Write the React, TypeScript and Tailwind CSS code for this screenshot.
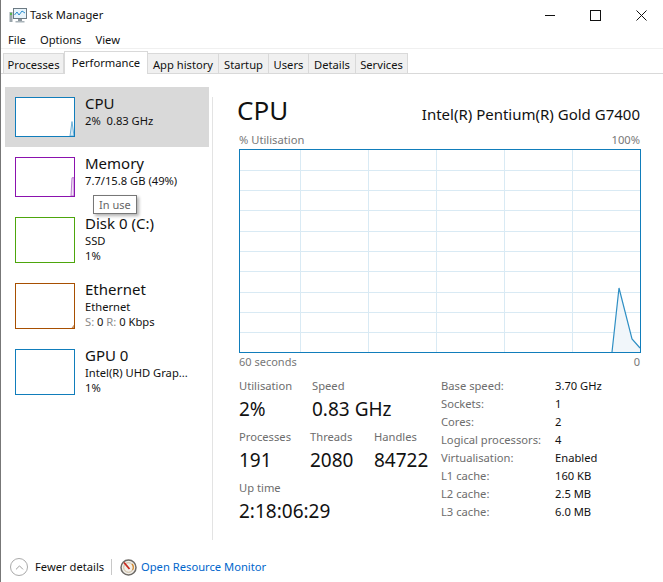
import React from "react";
import { ChevronUp } from "lucide-react";

const font = { fontFamily: '"Noto Sans", sans-serif' };

const tabs = [
  { name: "Processes", width: "w-[61px]" },
  { name: "Performance", width: "w-[84px]" },
  { name: "App history", width: "w-[71px]" },
  { name: "Startup", width: "w-[50px]" },
  { name: "Users", width: "w-[40px]" },
  { name: "Details", width: "w-[47px]" },
  { name: "Services", width: "w-[52px]" },
];

const TaskIcon = () => (
  <svg width="18" height="17" viewBox="0 0 18 17">
    <rect x="0.5" y="5" width="3" height="10" fill="#9aa5ab" />
    <rect x="4.5" y="1.5" width="13" height="10" fill="#e8f4fb" stroke="#6c7a83" />
    <path d="M5.5 8 L8 5 L10 8 L13 4 L16 6" fill="none" stroke="#2a8fd0" strokeWidth="1" />
    <rect x="9" y="12" width="4" height="2" fill="#8a959c" />
    <rect x="6.5" y="14" width="9" height="1.5" fill="#a9b3b9" />
    <rect x="1" y="6" width="2" height="2" fill="#57b84a" />
  </svg>
);

const ResourceIcon = () => (
  <svg width="17" height="17" viewBox="0 0 17 17">
    <circle cx="8.5" cy="8.5" r="7.5" fill="#f2efe9" stroke="#6d6a66" strokeWidth="1.5" />
    <circle cx="8.5" cy="8.5" r="4.8" fill="none" stroke="#c9b89c" strokeWidth="1" />
    <path d="M4 3.5 L9.5 10" stroke="#c8281e" strokeWidth="1.8" />
    <path d="M12 5 A5 5 0 0 1 12.5 11" fill="none" stroke="#d98a2b" strokeWidth="1.2" />
  </svg>
);

const WindowControls = () => (
  <div className="ml-auto mr-[16px] flex items-center gap-[35px]">
    <svg width="10" height="11" viewBox="0 0 10 11">
      <line x1="0" x2="10" y1="5.5" y2="5.5" stroke="#111" />
    </svg>
    <svg width="11" height="11" viewBox="0 0 11 11">
      <rect x="0.5" y="0.5" width="10" height="10" fill="none" stroke="#111" />
    </svg>
    <svg width="11" height="11" viewBox="0 0 11 11">
      <path d="M0.5 0.5 L10.5 10.5 M10.5 0.5 L0.5 10.5" stroke="#111" />
    </svg>
  </div>
);

const Thumb = ({
  height,
  color,
  path,
  fill,
  stroke,
}: {
  height: string;
  color: string;
  path?: string;
  fill?: string;
  stroke?: string;
}) => (
  <div className={`w-[60px] shrink-0 border bg-white ${height}`} style={{ borderColor: color }}>
    {path && (
      <svg className="h-full w-full" viewBox="0 0 58 100" preserveAspectRatio="none">
        <path d={path} fill={fill} stroke={stroke} strokeWidth="1" vectorEffect="non-scaling-stroke" />
      </svg>
    )}
  </div>
);

const SideItem = ({
  title,
  selected,
  className,
  thumb,
  children,
}: {
  title: string;
  selected?: boolean;
  className: string;
  thumb: React.ReactNode;
  children: React.ReactNode;
}) => (
  <div className={`flex gap-[10px] pl-[10px] pt-[10px] ${selected ? "bg-[#d9d9d9]" : ""} ${className}`}>
    {thumb}
    <div className="min-w-0 text-[11.2px] leading-[15px] text-[#111]">
      <div className="-mt-[4px] text-[15px] leading-[20px]">{title}</div>
      {children}
    </div>
  </div>
);

const Stat = ({ label, value, className }: { label: string; value: string; className: string }) => (
  <div className={className}>
    <div className="text-[11.2px] leading-[16px] text-[#6d6d6d]">{label}</div>
    <div className="mt-[2px] text-[19px] leading-[26px] text-[#111]">{value}</div>
  </div>
);

const specs = [
  ["Base speed:", "3.70 GHz"],
  ["Sockets:", "1"],
  ["Cores:", "2"],
  ["Logical processors:", "4"],
  ["Virtualisation:", "Enabled"],
  ["L1 cache:", "160 KB"],
  ["L2 cache:", "2.5 MB"],
  ["L3 cache:", "6.0 MB"],
];

const Graph = () => {
  const vertical = [60, 128, 196, 264, 332];
  const horizontal = [20, 40, 60, 81, 101, 121, 142, 162, 182];
  return (
    <div className="h-[204px] w-[402px] border border-[#117dbb] bg-white">
      <svg width="400" height="202" viewBox="0 0 400 202">
        {vertical.map((x) => (
          <line key={x} x1={x + 0.5} x2={x + 0.5} y1="0" y2="202" stroke="#d9eaf4" />
        ))}
        {horizontal.map((y) => (
          <line key={y} x1="0" x2="400" y1={y + 0.5} y2={y + 0.5} stroke="#d9eaf4" />
        ))}
        <path d="M372 202 L379 138 L392 189 L400 198 L400 202 Z" fill="#f1f6fa" stroke="none" />
        <path d="M372 202 L379 138 L392 189 L400 198" fill="none" stroke="#2f8fc4" strokeWidth="1.2" />
      </svg>
    </div>
  );
};

export default function App() {
  return (
    <div
      className="relative flex h-[582px] w-[663px] flex-col overflow-hidden border-l border-[#777] bg-white text-[#111]"
      style={font}
    >
      <div className="flex h-[30px] items-center pl-[8px]">
        <TaskIcon />
        <span className="ml-[3px] text-[11.2px]">Task Manager</span>
        <WindowControls />
      </div>

      <div className="flex h-[19px] items-center gap-[14px] border-b border-[#f0f0f0] pl-[7px] pt-[2px] text-[11.2px]">
        <span>File</span>
        <span>Options</span>
        <span>View</span>
      </div>

      <div className="flex h-[25px] items-end border-b border-[#d9d9d9] pl-[2px] text-[11.2px]">
        {tabs.map((t) => (
          <div
            key={t.name}
            className={
              t.name === "Performance"
                ? `relative z-10 -mb-px flex h-[23px] items-start justify-center border border-b-0 border-[#d9d9d9] bg-white pt-[3px] ${t.width}`
                : `flex h-[20px] items-center justify-center border border-l-0 border-b-0 border-[#d9d9d9] bg-[#f0f0f0] pt-[3px] first:border-l ${t.width}`
            }
          >
            {t.name}
          </div>
        ))}
      </div>

      <div className="flex flex-1 pt-[13px]">
        <div className="w-[211px] shrink-0 pl-[4px] pr-[3px]">
          <SideItem
            selected
            title="CPU"
            className="h-[60px]"
            thumb={
              <Thumb
                height="h-[40px]"
                color="#117dbb"
                path="M54 100 L56 62 L58 100 Z"
                fill="#d8e9f3"
                stroke="#6fb1d8"
              />
            }
          >
            <div>2%&nbsp; 0.83 GHz</div>
          </SideItem>
          <SideItem
            title="Memory"
            className="h-[60px]"
            thumb={
              <Thumb
                height="h-[40px]"
                color="#8b12ae"
                path="M55 100 L56 52 L58 52 L58 100 Z"
                fill="#f1e3f5"
                stroke="#b878cf"
              />
            }
          >
            <div>7.7/15.8 GB (49%)</div>
          </SideItem>
          <SideItem title="Disk 0 (C:)" className="h-[66px]" thumb={<Thumb height="h-[46px]" color="#4da60c" />}>
            <div>SSD</div>
            <div>1%</div>
          </SideItem>
          <SideItem
            title="Ethernet"
            className="h-[66px]"
            thumb={
              <Thumb
                height="h-[46px]"
                color="#a74f01"
                path="M56 100 L58 94 L58 100 Z"
                fill="#d9b08c"
                stroke="#c98f5c"
              />
            }
          >
            <div>Ethernet</div>
            <div>
              <span className="text-[#8a8a8a]">S:</span> 0 <span className="text-[#8a8a8a]">R:</span> 0 Kbps
            </div>
          </SideItem>
          <SideItem title="GPU 0" className="h-[66px]" thumb={<Thumb height="h-[46px]" color="#117dbb" />}>
            <div>Intel(R) UHD Grap...</div>
            <div>1%</div>
          </SideItem>
        </div>

        <div className="mb-[8px] mt-[10px] border-l border-[#e3e3e3]" />

        <div className="w-[403px] pl-[26px] pt-[4px]">
          <div className="flex h-[37px] w-[402px] items-end justify-between pr-[1px]">
            <span className="-ml-[2px] text-[26px] leading-[36px]">CPU</span>
            <span className="pb-[2px] text-[15px] leading-[24px]">Intel(R) Pentium(R) Gold G7400</span>
          </div>
          <div className="mt-[3px] flex w-[402px] justify-between pr-[1px] text-[11.2px] leading-[18px] text-[#777]">
            <span>% Utilisation</span>
            <span>100%</span>
          </div>
          <Graph />
          <div className="flex w-[402px] justify-between pr-[1px] text-[11px] leading-[18px] text-[#777]">
            <span>60 seconds</span>
            <span>0</span>
          </div>

          <div className="mt-[7px] flex w-[402px]">
            <div className="w-[202px]">
              <div className="flex">
                <Stat label="Utilisation" value="2%" className="w-[73px]" />
                <Stat label="Speed" value="0.83 GHz" className="" />
              </div>
              <div className="mt-[7px] flex">
                <Stat label="Processes" value="191" className="w-[71px]" />
                <Stat label="Threads" value="2080" className="w-[64px]" />
                <Stat label="Handles" value="84722" className="" />
              </div>
              <Stat label="Up time" value="2:18:06:29" className="mt-[7px]" />
            </div>
            <div className="-mt-[1px] text-[11.2px] leading-[18px]">
              {specs.map(([k, v]) => (
                <div key={k} className="flex">
                  <span className="w-[114px] text-[#6d6d6d]">{k}</span>
                  <span>{v}</span>
                </div>
              ))}
            </div>
          </div>
        </div>
      </div>

      <div className="flex h-[34px] items-center pl-[9px] pt-[4px] text-[11.2px]">
        <div className="flex h-[18px] w-[18px] items-center justify-center rounded-full border border-[#aaa]">
          <ChevronUp className="h-[13px] w-[13px] text-[#888]" strokeWidth={1.5} />
        </div>
        <span className="ml-[7px] w-[68px] whitespace-nowrap">Fewer details</span>
        <div className="ml-[8px] h-[16px] border-l border-[#c8c8c8]" />
        <div className="ml-[8px]">
          <ResourceIcon />
        </div>
        <span className="ml-[4px] text-[#0066cc]">Open Resource Monitor</span>
      </div>

      <div className="absolute left-[92px] top-[195px] border border-[#777] bg-white px-[5px] text-[11px] leading-[17px] text-[#666] shadow-[2px_2px_3px_rgba(0,0,0,0.3)]">
        In use
      </div>
    </div>
  );
}
